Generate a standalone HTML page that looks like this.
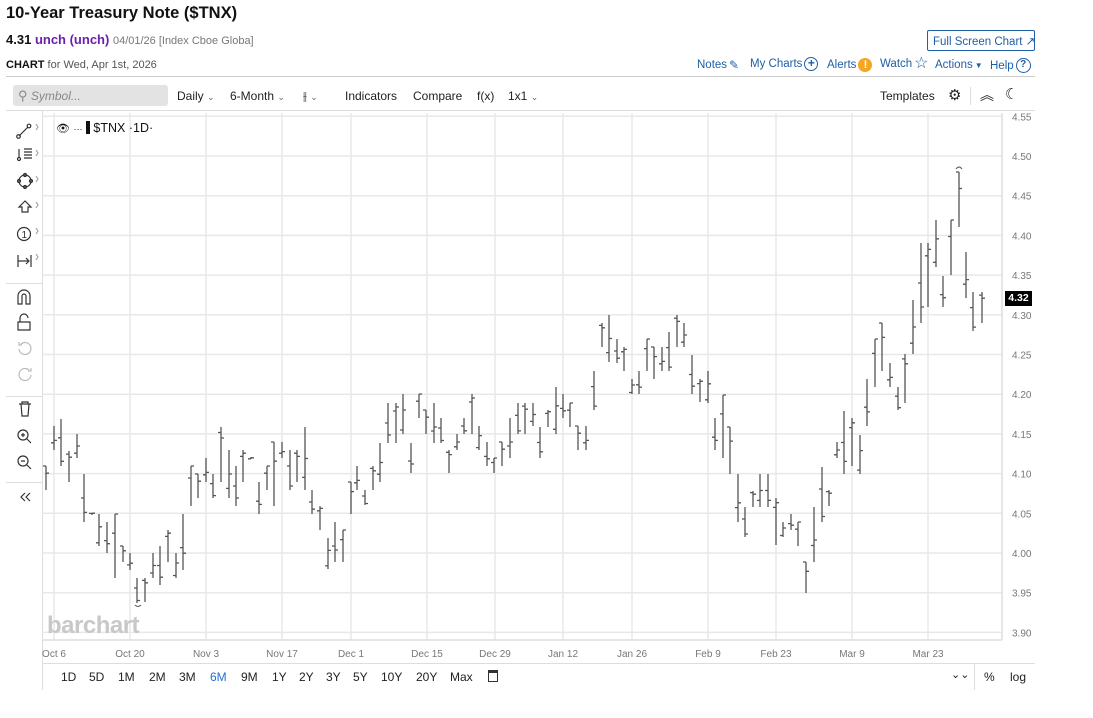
<!DOCTYPE html>
<html><head><meta charset="utf-8">
<style>
*{margin:0;padding:0;box-sizing:border-box}
body{width:1093px;height:718px;background:#fff;font-family:"Liberation Sans",sans-serif;color:#222;position:relative;overflow:hidden}
.a{position:absolute;white-space:nowrap}
.lnk{color:#1f5fa6;font-size:11.5px;display:flex;align-items:center;gap:2px}
.tb{font-size:12px;color:#222}
.rg{font-size:12px;color:#222}
.ci{display:inline-block;width:14px;height:14px;border:1.5px solid #1f5fa6;border-radius:50%;text-align:center;font-weight:bold}
</style></head><body>
<div class="a" style="left:6px;top:4px;font-size:16.5px;font-weight:bold;color:#111">10-Year Treasury Note ($TNX)</div>
<div class="a" style="left:6px;top:32px;font-size:13px"><b style="color:#111">4.31</b> <b style="color:#6b1fb0">unch (unch)</b> <span style="font-size:11px;color:#777">04/01/26 [Index Cboe Globa]</span></div>
<div class="a" style="left:6px;top:59px;font-size:11px;color:#555"><b style="color:#111">CHART</b> for Wed, Apr 1st, 2026</div>
<div class="a" style="left:927px;top:30px;width:108px;height:21px;border:1px solid #1f5fa6;border-radius:2px;font-size:11.5px;color:#1f5fa6;padding:3px 0 0 5px;overflow:hidden">Full Screen Chart ↗</div>
<div class="a lnk" style="left:697px;top:58px">Notes <span style="font-size:12px">✎</span></div>
<div class="a lnk" style="left:750px;top:57px">My Charts <span class="ci" style="font-size:12px;line-height:10px">+</span></div>
<div class="a lnk" style="left:827px;top:58px">Alerts<span style="display:inline-block;width:14px;height:14px;background:#f5a623;border-radius:50%;color:#fff;text-align:center;font-weight:bold;font-size:11px;line-height:14px">!</span></div>
<div class="a lnk" style="left:880px;top:57px">Watch<span style="font-size:16px;line-height:14px">☆</span></div>
<div class="a lnk" style="left:935px;top:59px">Actions <span style="font-size:8px">▼</span></div>
<div class="a lnk" style="left:990px;top:58px">Help<span class="ci" style="width:15px;height:15px;font-size:10px;line-height:12px">?</span></div>
<div class="a" style="left:6px;top:76px;width:1029px;height:1px;background:#ccc"></div>
<div class="a" style="left:13px;top:85px;width:155px;height:21px;background:#e3e3e3;border-radius:3px"></div>
<div class="a" style="left:18px;top:88px;font-size:12px;color:#888"><span style="font-size:13px">⚲</span> <i>Symbol...</i></div>
<div class="a tb" style="left:177px;top:89px">Daily <span style="font-size:9px;color:#666">⌄</span></div>
<div class="a tb" style="left:230px;top:89px">6-Month <span style="font-size:9px;color:#666">⌄</span></div>
<div class="a tb" style="left:303px;top:89px">⫲ <span style="font-size:9px;color:#666">⌄</span></div>
<div class="a tb" style="left:345px;top:89px">Indicators</div>
<div class="a tb" style="left:413px;top:89px">Compare</div>
<div class="a tb" style="left:477px;top:89px">f(x)</div>
<div class="a tb" style="left:508px;top:89px">1x1 <span style="font-size:9px;color:#666">⌄</span></div>
<div class="a tb" style="left:880px;top:89px">Templates</div>
<div class="a" style="left:948px;top:86px;font-size:15px">⚙</div>
<div class="a" style="left:970px;top:87px;width:1px;height:18px;background:#ddd"></div>
<div class="a" style="left:980px;top:85px;font-size:14px">︽</div>
<div class="a" style="left:1005px;top:85px;font-size:15px">☾</div>
<div class="a" style="left:6px;top:110px;width:1029px;height:1px;background:#ddd"></div>
<div class="a" style="left:42px;top:110px;width:1px;height:580px;background:#ddd"></div>
<svg class="a" style="left:0;top:110px" width="42" height="400" fill="none" stroke="#333" stroke-width="1.2">
<path d="M19 26 L28 17"/><circle cx="18.5" cy="26.5" r="1.8"/><circle cx="29" cy="16" r="1.8"/>
<path d="M36 14l2 3-2 3M36 40l2 3-2 3M36 66l2 3-2 3M36 92l2 3-2 3M36 118l2 3-2 3M36 144l2 3-2 3" stroke="#aaa"/>
<path d="M24 39h8M24 42h8M24 45h8M24 48h8M19 39v9"/><circle cx="19" cy="49" r="1.5"/>
<circle cx="25" cy="71" r="6"/><circle cx="25" cy="65" r="1.5"/><circle cx="19" cy="71" r="1.5"/><circle cx="31" cy="71" r="1.5"/><circle cx="25" cy="77" r="1.5"/>
<path d="M25 91l-6 6h3v5h6v-5h3z"/>
<circle cx="24" cy="124" r="6.5"/><text x="21.5" y="128" font-size="10" fill="#333" stroke="none" font-family="Liberation Sans">1</text>
<path d="M18 145v12M18 151h10M26 148l3 3-3 3M31 145v12"/>
<path d="M18 194v-8a6 6 0 0 1 12 0v8h-4v-8a2 2 0 0 0-4 0v8z"/>
<path d="M18 212h12v8h-12zM20 212v-4a4 4 0 0 1 8 0"/>
<path d="M19 239a6 6 0 1 0 2-5M19 232v3h3" stroke="#bbb"/>
<path d="M31 265a6 6 0 1 1-2-5M31 258v3h-3" stroke="#bbb"/>
<path d="M19 294h12M21 294l1 12h6l1-12M22 294v-2h6v2"/>
<circle cx="23" cy="325" r="5"/><path d="M27 329l4 4M21 325h4M23 323v4"/>
<circle cx="23" cy="351" r="5"/><path d="M27 355l4 4M21 351h4"/>
<path d="M25 383l-4 4 4 4M30 383l-4 4 4 4"/>
</svg>
<div class="a" style="left:6px;top:283px;width:36px;height:1px;background:#ddd"></div>
<div class="a" style="left:6px;top:396px;width:36px;height:1px;background:#ddd"></div>
<div class="a" style="left:6px;top:482px;width:36px;height:1px;background:#ddd"></div>
<svg id="ch" class="a" style="left:0;top:0" width="1093" height="718"></svg>
<div class="a" style="left:56px;top:121px;font-size:12.5px;color:#111"><span style="font-size:11px">👁</span> <span style="font-size:9px">···</span> <span style="display:inline-block;width:4px;height:13px;background:#111;vertical-align:-2px"></span> $TNX ·1D·</div>
<div class="a" style="left:47px;top:612px;font-size:24px;font-weight:bold;color:#c8c8c8;letter-spacing:-0.5px">barchart</div>
<div class="a" style="left:1005px;top:291px;width:27px;height:15px;background:#000;color:#fff;font-size:10.5px;font-weight:bold;text-align:center;line-height:15px">4.32</div>
<div class="a" style="left:42px;top:663px;width:993px;height:1px;background:#ddd"></div>
<div class="a" style="left:974px;top:664px;width:1px;height:26px;background:#ddd"></div>
<div class="a rg" style="left:61px;top:670px">1D</div><div class="a rg" style="left:89px;top:670px">5D</div><div class="a rg" style="left:118px;top:670px">1M</div><div class="a rg" style="left:149px;top:670px">2M</div><div class="a rg" style="left:179px;top:670px">3M</div><div class="a rg" style="left:210px;top:670px;color:#1f6fd0">6M</div><div class="a rg" style="left:241px;top:670px">9M</div><div class="a rg" style="left:272px;top:670px">1Y</div><div class="a rg" style="left:299px;top:670px">2Y</div><div class="a rg" style="left:326px;top:670px">3Y</div><div class="a rg" style="left:353px;top:670px">5Y</div><div class="a rg" style="left:381px;top:670px">10Y</div><div class="a rg" style="left:416px;top:670px">20Y</div><div class="a rg" style="left:450px;top:670px">Max</div>
<div class="a" style="left:488px;top:670px;width:10px;height:12px;border:1.3px solid #333;border-top-width:3px"></div>
<div class="a rg" style="left:951px;top:668px;font-size:11px">⌄⌄</div>
<div class="a rg" style="left:984px;top:670px">%</div><div class="a rg" style="left:1010px;top:670px">log</div>
<script>
var s=document.getElementById('ch'),h='';
function Y(p){return 156+(4.50-p)*794;}
var vx=[54,130,206,282,351,427,495,563,632,708,776,852,928];
vx.forEach(function(x){h+='<line x1="'+x+'" y1="113" x2="'+x+'" y2="640" stroke="#e8e8e8" stroke-width="1.5"/>';});
for(var i=0;i<14;i++){var p=4.55-i*0.05,y=Y(p);h+='<line x1="42" y1="'+y+'" x2="1002" y2="'+y+'" stroke="#e8e8e8" stroke-width="1.5"/>';h+='<text x="1012" y="'+(y+4)+'" font-size="10" fill="#777" font-family="Liberation Sans">'+p.toFixed(2)+'</text>';}
h+='<line x1="1002" y1="113" x2="1002" y2="640" stroke="#ddd" stroke-width="1.5"/>';
h+='<line x1="42" y1="640" x2="1002" y2="640" stroke="#ddd" stroke-width="1.5"/>';
var dl=['Oct 6','Oct 20','Nov 3','Nov 17','Dec 1','Dec 15','Dec 29','Jan 12','Jan 26','Feb 9','Feb 23','Mar 9','Mar 23'];
dl.forEach(function(t,i){h+='<text x="'+vx[i]+'" y="657" font-size="10" fill="#777" text-anchor="middle" font-family="Liberation Sans">'+t+'</text>';});
var b=[[46,466,490],[54,426,450],[61,419,466],[69,451,482],[77,434,458],[84,474,522],[92,513,515],[99,514,546],[107,522,553],[115,514,578],[123,546,562],[130,553,570],[137,578,603],[145,578,602],[153,553,578],[160,546,585],[168,530,562],[176,553,578],[183,514,570],[191,466,506],[198,474,498],[206,458,482],[213,474,498],[221,427,482],[229,450,498],[236,466,506],[243,450,482],[251,457,459],[259,482,514],[267,466,490],[274,442,506],[282,442,458],[290,450,490],[297,450,482],[305,427,490],[312,490,514],[320,506,530],[328,538,569],[335,522,562],[343,530,562],[351,482,514],[357,466,490],[365,490,505],[373,466,490],[380,443,482],[388,403,443],[396,403,443],[403,394,434],[411,443,473],[419,394,418],[426,410,434],[434,403,443],[441,418,443],[449,450,473],[457,434,450],[464,418,434],[472,394,434],[479,426,450],[487,442,466],[494,458,473],[502,442,466],[510,418,458],[518,403,434],[525,403,434],[533,403,426],[540,427,458],[548,410,427],[556,387,434],[563,394,418],[570,403,427],[578,426,450],[586,426,450],[594,371,410],[602,323,347],[609,315,362],[617,339,363],[624,347,371],[632,379,394],[639,371,394],[647,339,371],[654,347,379],[662,347,371],[669,332,371],[677,315,347],[684,323,347],[692,355,394],[700,379,402],[708,371,403],[715,418,450],[723,395,458],[730,427,474],[738,474,522],[745,507,537],[753,491,507],[760,474,507],[768,474,507],[776,498,545],[783,522,537],[791,514,530],[798,522,546],[806,562,593],[814,507,562],[822,467,522],[829,490,506],[837,442,458],[844,411,474],[852,418,466],[860,435,474],[867,379,426],[875,339,387],[882,323,371],[890,363,387],[898,387,410],[905,354,403],[913,300,354],[921,243,323],[928,243,307],[936,220,267],[943,276,307],[951,220,275],[959,172,227],[966,252,298],[973,292,331],[982,292,323]];
b.forEach(function(d,i){var x=d[0],t=d[1],l=d[2],r=l-t,f1=((i*37)%10)/10,f2=((i*53+3)%10)/10;var o=t+r*f1,c=t+r*f2;
h+='<path d="M'+x+' '+t+'V'+l+'M'+(x-3)+' '+o+'H'+x+'M'+x+' '+c+'H'+(x+3)+'" stroke="#555" stroke-width="1.3" fill="none"/>';});
h+='<path d="M956 169q3-4 6 0" stroke="#555" fill="none"/><path d="M135 605q3 3 6 0" stroke="#555" fill="none"/>';
s.innerHTML=h;
</script>
</body></html>
